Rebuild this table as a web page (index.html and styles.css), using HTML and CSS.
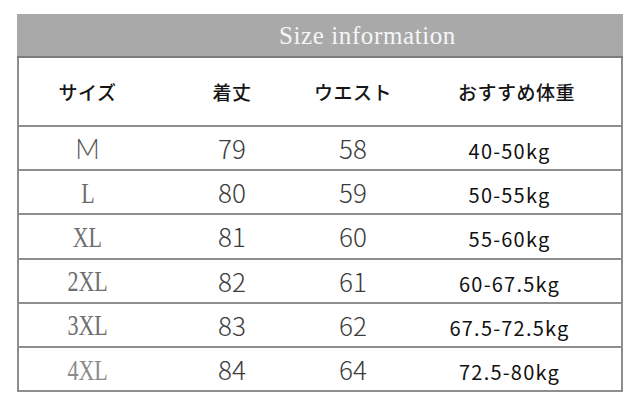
FILE: index.html
```html
<!DOCTYPE html>
<html lang="ja">
<head>
<meta charset="utf-8">
<title>Size information</title>
<link rel="stylesheet" href="styles.css">
</head>
<body>
<div class="table">
  <div class="title">Size information</div>
  <div class="row head">
    <div class="c c1">サイズ</div>
    <div class="c c2">着丈</div>
    <div class="c c3">ウエスト</div>
    <div class="c c4">おすすめ体重</div>
  </div>
  <div class="row">
    <div class="c c1"><span class="size sans">M</span></div>
    <div class="c c2 num">79</div>
    <div class="c c3 num">58</div>
    <div class="c c4 kg">40-50kg</div>
  </div>
  <div class="row">
    <div class="c c1"><span class="size">L</span></div>
    <div class="c c2 num">80</div>
    <div class="c c3 num">59</div>
    <div class="c c4 kg">50-55kg</div>
  </div>
  <div class="row">
    <div class="c c1"><span class="size">XL</span></div>
    <div class="c c2 num">81</div>
    <div class="c c3 num">60</div>
    <div class="c c4 kg">55-60kg</div>
  </div>
  <div class="row">
    <div class="c c1"><span class="size">2XL</span></div>
    <div class="c c2 num">82</div>
    <div class="c c3 num">61</div>
    <div class="c c4 kg">60-67.5kg</div>
  </div>
  <div class="row">
    <div class="c c1"><span class="size">3XL</span></div>
    <div class="c c2 num">83</div>
    <div class="c c3 num">62</div>
    <div class="c c4 kg">67.5-72.5kg</div>
  </div>
  <div class="row last">
    <div class="c c1"><span class="size light">4XL</span></div>
    <div class="c c2 num">84</div>
    <div class="c c3 num">64</div>
    <div class="c c4 kg">72.5-80kg</div>
  </div>
</div>
</body>
</html>
```

FILE: styles.css
```css
html, body {
  margin: 0;
  padding: 0;
  background: #ffffff;
}

body {
  padding: 14px 0 0 17px;
  font-family: "Noto Sans CJK JP", "Noto Sans", sans-serif;
}

.table {
  width: 606px;
  box-sizing: border-box;
  border-left: 2px solid #8e8e8e;
  border-right: 2px solid #8e8e8e;
  border-bottom: 2px solid #8e8e8e;
}

.title {
  height: 44px;
  margin: 0 -2px;
  background: #a9a9a9;
  color: #f6f6f6;
  font-family: "Liberation Serif", serif;
  font-size: 25px;
  letter-spacing: 0.6px;
  line-height: 44px;
  padding-left: 262px;
  box-sizing: border-box;
  border-bottom: 2px solid #7c7c7c;
}

.row {
  display: grid;
  grid-template-columns: 137px 152px 90px 223px;
  height: 42.2px;
  border-bottom: 2px solid #8e8e8e;
  align-items: center;
}

.row.last {
  border-bottom: none;
}

.row.head {
  height: 67px;
}

.c {
  text-align: center;
  white-space: nowrap;
}

.head .c {
  font-size: 19px;
  font-weight: 500;
  color: #151515;
  letter-spacing: 0.5px;
}

.head .c4 {
  padding-left: 14px;
}

.size {
  display: inline-block;
  font-family: "Liberation Serif", serif;
  font-size: 29px;
  color: #6e6e6e;
  transform: scaleX(0.76);
  line-height: 1;
  padding-top: 2px;
}

.size.sans {
  font-family: "Lato", "Noto Sans", sans-serif;
  font-weight: 300;
  font-size: 27px;
  color: #555;
  transform: none;
}

.size.light {
  color: #8a8a8a;
}

.num {
  font-size: 26px;
  font-weight: 300;
  color: #3c3c3c;
  line-height: 1;
}

.kg {
  font-size: 20px;
  font-weight: 400;
  color: #111;
  letter-spacing: 1.2px;
  line-height: 1;
  padding-top: 6px;
}
```
